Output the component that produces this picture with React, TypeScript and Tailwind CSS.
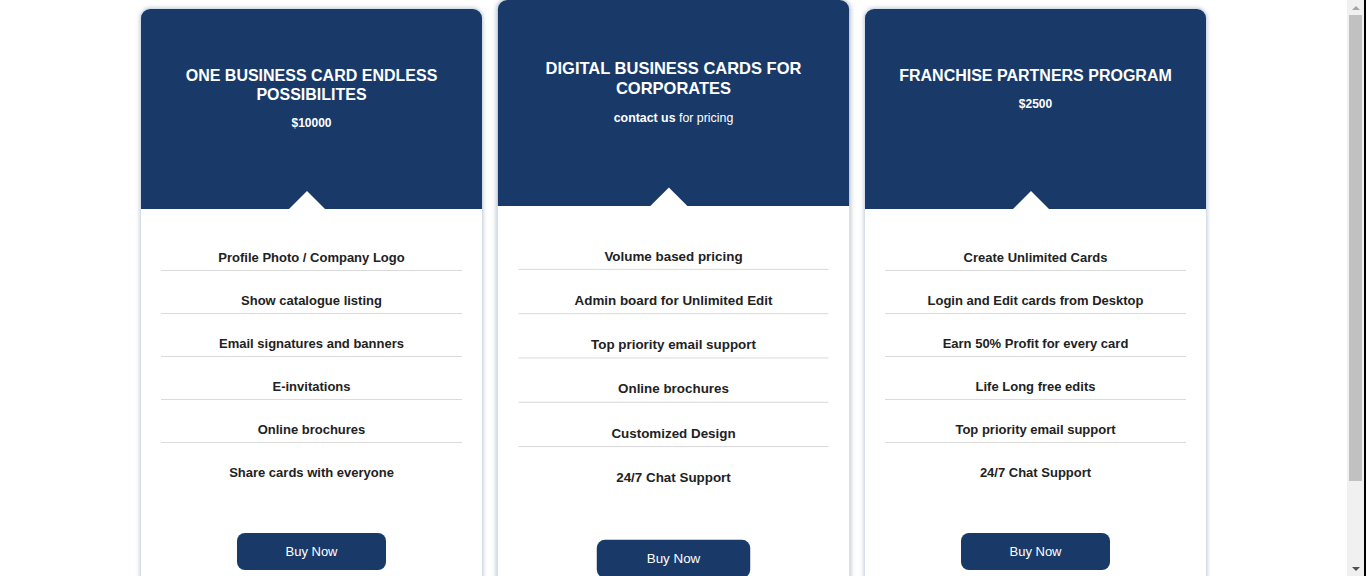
const plans = [
  {
    title: "One Business Card Endless Possibilites",
    price: <span>$10000</span>,
    features: [
      "Profile Photo / Company Logo",
      "Show catalogue listing",
      "Email signatures and banners",
      "E-invitations",
      "Online brochures",
      "Share cards with everyone",
    ],
    active: false,
  },
  {
    title: "Digital Business Cards for Corporates",
    price: (
      <span>
        contact us <span className="font-normal">for pricing</span>
      </span>
    ),
    features: [
      "Volume based pricing",
      "Admin board for Unlimited Edit",
      "Top priority email support",
      "Online brochures",
      "Customized Design",
      "24/7 Chat Support",
    ],
    active: true,
  },
  {
    title: "Franchise Partners Program",
    price: <span>$2500</span>,
    features: [
      "Create Unlimited Cards",
      "Login and Edit cards from Desktop",
      "Earn 50% Profit for every card",
      "Life Long free edits",
      "Top priority email support",
      "24/7 Chat Support",
    ],
    active: false,
  },
];

function Scrollbar() {
  return (
    <div className="flex h-full w-[19px] shrink-0">
      <div className="flex w-[17px] flex-col bg-[#f0f0f0]">
        <div className="flex h-[15px] items-center justify-center">
          <div className="h-0 w-0 border-x-[4px] border-b-[4px] border-x-transparent border-b-[#a3a3a3]" />
        </div>
        <div className="flex-1 px-[2px]">
          <div className="h-[466px] bg-[#c1c1c1]" />
        </div>
        <div className="flex h-[15px] items-center justify-center">
          <div className="h-0 w-0 border-x-[4px] border-t-[4px] border-x-transparent border-t-[#505050]" />
        </div>
      </div>
      <div className="w-[2px] bg-black" />
    </div>
  );
}

export default function App() {
  return (
    <div
      className="flex h-screen overflow-hidden bg-white"
      style={{ fontFamily: '"Liberation Sans", Arial, sans-serif' }}
    >
      <main className="flex-1 overflow-hidden pt-[8px]">
        <div className="flex justify-center gap-[19px]">
          {plans.map((plan) => (
            <div
              key={plan.title}
              className={
                "relative flex h-[600px] w-[343px] shrink-0 flex-col rounded-t-[10px] border border-[#d5dde8] bg-white shadow-[0_0_4px_rgba(24,58,105,0.28)] " +
                (plan.active ? "z-10 scale-[1.03]" : "")
              }
            >
              {/* header */}
              <div className="relative h-[200px] rounded-t-[9px] bg-[#193a69] px-[30px] pt-[57px] text-center text-white">
                <h3 className="text-[16px] font-bold uppercase leading-[19px]">{plan.title}</h3>
                <p className="mt-[12px] text-[12px] font-bold leading-[14px]">{plan.price}</p>
                <div className="absolute bottom-0 left-[calc(50%-23px)] h-0 w-0 border-x-[18px] border-b-[18px] border-x-transparent border-b-white" />
              </div>

              {/* features */}
              <ul className="mx-[20px] mt-[19px]">
                {plan.features.map((f, i) => (
                  <li
                    key={f}
                    className={
                      "pt-[21px] pb-[4px] text-center text-[13px] font-bold leading-[17px] text-[#222] " +
                      (i < plan.features.length - 1 ? "border-b border-[#dadada]" : "")
                    }
                  >
                    {f}
                  </li>
                ))}
              </ul>

              <div className="mt-[48px] flex justify-center">
                <button className="h-[37px] w-[149px] rounded-[8px] bg-[#193a69] text-[13px] text-white">
                  Buy Now
                </button>
              </div>
            </div>
          ))}
        </div>
      </main>
      <Scrollbar />
    </div>
  );
}
